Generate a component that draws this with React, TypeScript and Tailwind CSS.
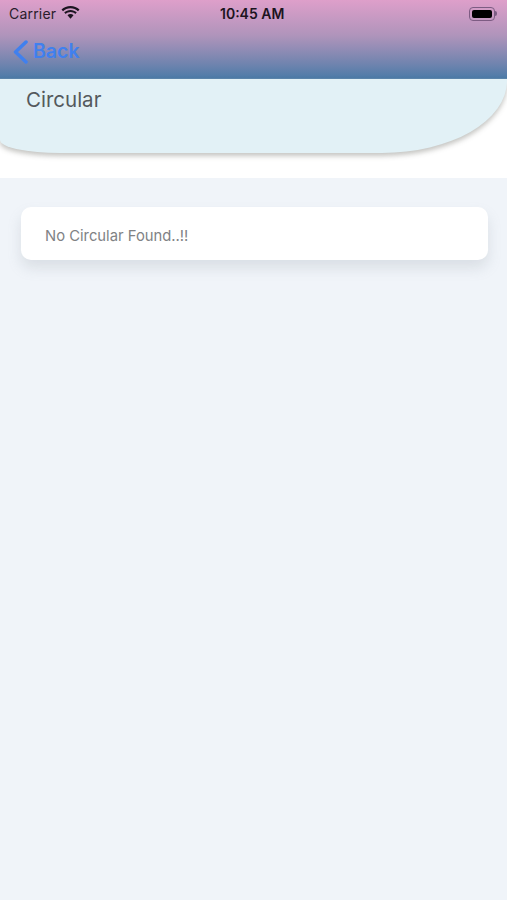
import React from "react";

export default function App() {
  return (
    <div className="w-[507px] h-[900px] overflow-hidden flex flex-col bg-[#f0f4f9] font-['Inter','Liberation_Sans',sans-serif]">
      <div className="h-[79px] shrink-0 bg-gradient-to-b from-[#de9fca] via-[#b094bb] via-45% to-[#4c7ba8] flex flex-col border-b border-[#5b86ad]">
        <div className="h-[27px] px-[9px] flex items-center relative text-[#2a1c2c]">
          <span className="text-[14px] leading-none tracking-[0.2px]">Carrier</span>
          <svg className="ml-[5px] mb-[1px]" width="19" height="14" viewBox="0 0 19 14" fill="#1c1420">
            <path d="M9.5 2.2c2.9 0 5.5 1.1 7.5 3l1.5-1.6C16.100 1.300 13 0 9.500 0S2.900 1.300.5 3.600L2 5.200c2-1.900 4.600-3 7.500-3z" />
            <path d="M9.500 6c1.800 0 3.500.7 4.800 1.900l1.500-1.600C14.100 4.800 11.900 3.900 9.500 3.900s-4.600.9-6.300 2.400l1.500 1.600C6 6.700 7.700 6 9.500 6z" />
            <path d="M9.500 8c-1.100 0-2.200.4-3 1.200l3 3.600 3-3.600c-.8-.8-1.900-1.200-3-1.200z" />
          </svg>
          <span className="absolute left-[220px] text-[14px] leading-none font-semibold text-[#1c1420]">10:45 AM</span>
          <div className="ml-auto mr-[1px] flex items-center">
            <div className="w-[26px] h-[14px] rounded-[4px] border border-[#7d5c83] p-[2px]">
              <div className="w-full h-full rounded-[2px] bg-black" />
            </div>
            <div className="w-[2px] h-[5px] bg-[#7d5c83] rounded-r-sm" />
          </div>
        </div>
        <div className="flex items-center h-[33px] pl-[12px] mt-[8px] text-[#4080ee]">
          <svg width="17" height="24" viewBox="0 0 17 24" fill="none" stroke="currentColor" strokeWidth="3.500" strokeLinecap="round" strokeLinejoin="round">
            <path d="M14 2 3.500 12 14 22" />
          </svg>
          <span className="ml-[4px] text-[19.500px] leading-none font-semibold">Back</span>
        </div>
      </div>
      <div className="bg-white h-[99px] shrink-0">
        <div className="h-[74px] bg-[#e2f1f6] rounded-bl-[60px_13px] rounded-br-[125px_72px] shadow-[0_3px_5px_rgba(90,90,80,0.35)] pl-[26px] pt-[8px]">
          <span className="text-[20.500px] leading-[26px] text-[#54595c]">Circular</span>
        </div>
      </div>
      <div className="ml-[21px] w-[467px] mt-[29px] h-[53px] bg-white rounded-[10px] shadow-[0_8px_14px_rgba(130,140,150,0.2)] flex items-center pl-[24px] pt-[5px]">
        <span className="text-[14.800px] leading-none text-[#808285]">No Circular Found..!!</span>
      </div>
    </div>
  );
}
